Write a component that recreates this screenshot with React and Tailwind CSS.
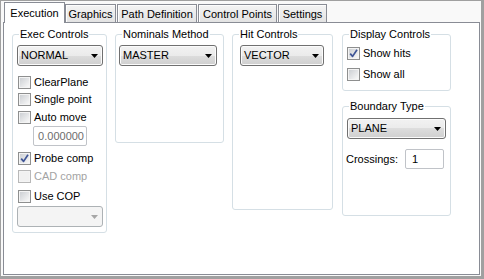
import React from "react";

function Arrow({ disabled }) {
  return (
    <svg width="7" height="4" viewBox="0 0 7 4" className="shrink-0">
      <path d="M0 0 H7 L3.5 4 Z" fill={disabled ? "#a6a6a6" : "#000"} />
    </svg>
  );
}

function Combo({ text, className = "", disabled }) {
  return (
    <div
      className={`flex h-[21px] items-center justify-between rounded-[3px] border pl-[3px] pr-[4px] ${
        disabled
          ? "border-[#adb2b5] bg-[#f4f4f4]"
          : "border-[#707070] bg-[linear-gradient(to_bottom,#f2f2f2_0%,#ebebeb_50%,#dddddd_50%,#cfcfcf_100%)] shadow-[inset_0_0_0_1px_#fbfbfb]"
      } ${className}`}
    >
      <span className="text-[11px] leading-[13px] text-black">{text}</span>
      <Arrow disabled={disabled} />
    </div>
  );
}

function Check({ label, checked, disabled, className = "" }) {
  return (
    <div className={`flex h-[17px] items-center ${className}`}>
      <div
        className={`flex h-[13px] w-[13px] shrink-0 border p-[1px] ${
          disabled ? "border-[#b8b8b8] bg-[#f4f4f4]" : "border-[#8e8f8f] bg-[#f4f4f4]"
        }`}
      >
        <div
          className={`h-full w-full ${
            disabled ? "bg-[#f1f1f1]" : "bg-linear-to-br from-[#cdd0d4] to-[#f8f8f8]"
          }`}
        >
          {checked && (
            <svg width="9" height="9" viewBox="0 0 9 9" className="overflow-visible">
              <path
                d="M1.2 4.6 L3.6 7.4 L8 0.8"
                fill="none"
                stroke="#3f5596"
                strokeWidth="1.7"
                strokeLinejoin="round"
              />
            </svg>
          )}
        </div>
      </div>
      <span
        className={`ml-[3px] text-[11px] leading-[13px] ${
          disabled ? "text-[#a3a3a3]" : "text-black"
        }`}
      >
        {label}
      </span>
    </div>
  );
}

function Group({ title, className = "", children }) {
  return (
    <fieldset
      className={`m-0 min-w-0 shrink-0 rounded-[3px] border border-[#d5dfe5] p-0 ${className}`}
    >
      <legend className="ml-[6px] px-[1px] text-[11px] leading-[13px] text-black">
        {title}
      </legend>
      <div className="flex flex-col items-start">{children}</div>
    </fieldset>
  );
}

function Tab({ label, selected, className = "" }) {
  if (selected) {
    return (
      <div
        className={`relative z-10 -mb-px flex h-[21px] shrink-0 justify-center border-l border-r border-t border-[#898c95] bg-white pt-[4px] text-[11px] leading-[13px] text-black ${className}`}
      >
        {label}
      </div>
    );
  }
  return (
    <div
      className={`flex h-[18px] shrink-0 justify-center border-l border-r border-t border-[#898c95] bg-linear-to-b from-[#f4f4f4] to-[#e3e3e3] pt-[3px] text-[11px] leading-[13px] text-black shadow-[inset_1px_1px_0_#fdfdfd] ${className}`}
    >
      {label}
    </div>
  );
}

export default function App() {
  return (
    <div className="flex h-[279px] w-[484px] flex-col border-b-[3px] border-l border-r-[3px] border-t border-[#a0a0a0] bg-[#f9f9f9] pb-[1px] pl-[2px] pr-[1px] pt-[1px] font-['Liberation_Sans',Arial,sans-serif]">
      <div className="flex h-[20px] shrink-0 items-end pl-[1px]">
        <Tab label="Execution" selected className="w-[61px]" />
        <Tab label="Graphics" className="w-[51px]" />
        <Tab label="Path Definition" className="ml-[1px] w-[80px]" />
        <Tab label="Control Points" className="ml-[1px] w-[79px]" />
        <Tab label="Settings" className="ml-[1px] w-[49px]" />
      </div>
      <div className="flex flex-1 items-start border border-[#898c95] bg-white pl-[8px] pt-[5px]">
        <Group title="Exec Controls" className="h-[205px] w-[95px]">
          <Combo text="NORMAL" className="ml-[4px] mt-[4px] w-[86px]" />
          <Check label="ClearPlane" className="ml-[5px] mt-[8px]" />
          <Check label="Single point" className="ml-[5px]" />
          <Check label="Auto move" className="ml-[5px] mt-[1px]" />
          <div className="ml-[20px] flex h-[20px] w-[54px] items-center justify-end rounded-[2px] border border-[#c0c3c8] bg-white pr-[2px] text-[11px] leading-[13px] text-[#6d6d6d]">
            0.000000
          </div>
          <Check label="Probe comp" checked className="ml-[5px] mt-[4px]" />
          <Check label="CAD comp" disabled className="ml-[5px] mt-[1px]" />
          <Check label="Use COP" className="ml-[5px] mt-[3px]" />
          <Combo text="" disabled className="ml-[4px] mt-[1px] w-[86px]" />
        </Group>

        <Group title="Nominals Method" className="ml-[8px] h-[115px] w-[109px]">
          <Combo text="MASTER" className="ml-[3px] mt-[4px] w-[98px]" />
        </Group>

        <Group title="Hit Controls" className="ml-[8px] h-[182px] w-[101px]">
          <Combo text="VECTOR" className="ml-[7px] mt-[4px] w-[84px]" />
        </Group>

        <div className="ml-[9px] flex w-[109px] shrink-0 flex-col">
          <Group title="Display Controls" className="h-[63px] w-[109px]">
            <Check label="Show hits" checked className="ml-[4px] mt-[4px]" />
            <Check label="Show all" className="ml-[4px] mt-[4px]" />
          </Group>
          <Group title="Boundary Type" className="mt-[9px] h-[116px] w-[109px]">
            <Combo text="PLANE" className="ml-[4px] mt-[5px] w-[99px]" />
            <div className="mt-[10px] flex items-center">
              <span className="ml-[3px] w-[59px] text-[11px] leading-[13px] text-black">
                Crossings:
              </span>
              <div className="flex h-[20px] w-[39px] items-center rounded-[2px] border border-[#c0c3c8] bg-white pl-[6px] text-[11px] leading-[13px] text-black">
                1
              </div>
            </div>
          </Group>
        </div>
      </div>
    </div>
  );
}
